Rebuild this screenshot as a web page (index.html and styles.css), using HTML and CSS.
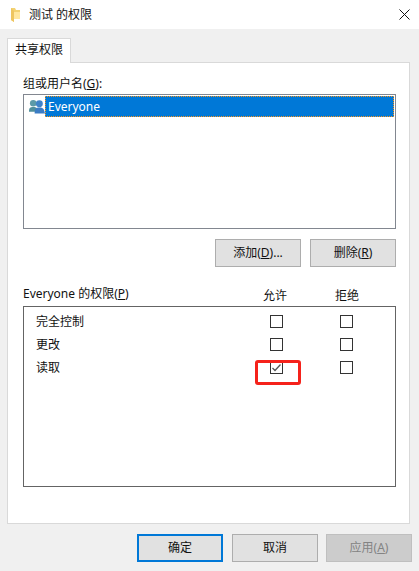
FILE: index.html
```html
<!doctype html>
<html lang="zh-CN">
  <head>
    <meta charset="UTF-8" />
    <title>测试 的权限</title>
    <link rel="stylesheet" href="styles.css">
  </head>
  <body>
    <div class="titlebar">
      <svg class="folder-icon" width="10" height="14" viewBox="0 0 10 14">
        <path d="M0 0h4l1 2h4v9H3v3L0 12z" fill="#f3d272" />
        <path d="M3 4h6v7H3z" fill="#ffe7a0" />
        <path d="M0 0l3 3v11l-3-2z" fill="#eec560" />
      </svg>
      <span class="title">测试 的权限</span>
      <svg class="close-icon" width="11" height="11" viewBox="0 0 11 11">
        <path d="M.5.5l10 10M10.5.5l-10 10" stroke="#111" stroke-width="1" fill="none" />
      </svg>
    </div>

    <div class="tabs">
      <div class="tab">共享权限</div>
    </div>

    <div class="panel">
      <label class="label">组或用户名(<u>G</u>):</label>
      <div class="user-list">
        <div class="user-row">
          <svg class="users-icon" width="16" height="15" viewBox="0 0 17 15">
            <circle cx="4.5" cy="4" r="3.5" fill="#5b9aa8" />
            <path d="M0 13c0-4 1-5 4.5-5s4.5 1 4.5 5z" fill="#4f8f9c" />
            <circle cx="11" cy="4.5" r="3.7" fill="#3f83c8" />
            <path d="M6 15c0-5 1-6.500 5-6.500s5 1.500 6 6.500z" fill="#3b7cc4" />
          </svg>
          <span class="user-name">Everyone</span>
        </div>
      </div>

      <div class="list-actions">
        <button class="btn">添加(<u>D</u>)...</button>
        <button class="btn">删除(<u>R</u>)</button>
      </div>

      <div class="perm-head">
        <span>Everyone 的权限(<u>P</u>)</span>
        <span class="col col-label">允许</span>
        <span class="col">拒绝</span>
      </div>

      <div class="perm-box">
        <div class="perm-row">
          <span>完全控制</span>
          <span class="col"><i class="check"></i></span>
          <span class="col"><i class="check"></i></span>
        </div>
        <div class="perm-row">
          <span>更改</span>
          <span class="col"><i class="check"></i></span>
          <span class="col"><i class="check"></i></span>
        </div>
        <div class="perm-row">
          <span>读取</span>
          <span class="col highlight">
            <i class="check">
              <svg width="11" height="11" viewBox="0 0 11 11">
                <path d="M1.500 6l2.500 2.500 5.500-6" stroke="#555" stroke-width="1.300" fill="none" />
              </svg>
            </i>
          </span>
          <span class="col"><i class="check"></i></span>
        </div>
      </div>
    </div>

    <div class="footer">
      <button class="btn btn-default">确定</button>
      <button class="btn">取消</button>
      <button class="btn btn-disabled">应用(<u>A</u>)</button>
    </div>
  </body>
</html>
```

FILE: styles.css
```css
* {
  margin: 0;
  padding: 0;
  box-sizing: border-box;
}

body {
  width: 419px;
  height: 571px;
  overflow: hidden;
  background: #f0f0f0;
  color: #111;
  font-family: "Noto Sans", "Noto Sans CJK SC", sans-serif;
  font-size: 12px;
  line-height: 16px;
}

.titlebar {
  display: flex;
  align-items: center;
  height: 29px;
  padding: 0 9px 0 11px;
  background: white;
}

.title {
  margin-left: 8px;
  flex: 1;
}

.tabs {
  display: flex;
  padding: 9px 0 0 7px;
}

.tab {
  width: 64px;
  height: 25px;
  margin-bottom: -1px;
  padding-top: 3px;
  text-align: center;
  background: white;
  border: 1px solid #d9d9d9;
  border-bottom: none;
  position: relative;
}

.panel {
  width: 403px;
  height: 462px;
  margin-left: 7px;
  padding: 13px 13px 0 15px;
  background: white;
  border: 1px solid #d9d9d9;
}

.label {
  display: block;
  height: 18px;
}

.user-list {
  width: 373px;
  height: 135px;
  padding: 1px;
  border: 1px solid #828790;
}

.user-row {
  display: flex;
  align-items: center;
  height: 21px;
  padding-left: 4px;
}

.users-icon {
  flex: none;
}

.user-name {
  flex: 1;
  height: 21px;
  padding-left: 2px;
  line-height: 19px;
  color: white;
  background: #0078d7;
  border: 1px dotted #f7941e;
}

.list-actions {
  display: flex;
  justify-content: flex-end;
  gap: 9px;
  width: 373px;
  margin-top: 10px;
}

.btn {
  width: 86px;
  height: 28px;
  font: inherit;
  color: inherit;
  background: #e1e1e1;
  border: 1px solid #adadad;
}

.perm-head {
  display: grid;
  grid-template-columns: 1fr 70px 70px;
  width: 373px;
  margin-top: 19px;
  padding-right: 14px;
  height: 20px;
}

.col {
  display: flex;
  justify-content: center;
  align-items: center;
  position: relative;
}

.col-label {
  margin-left: -4px;
}

.perm-box {
  width: 373px;
  height: 181px;
  padding: 3px 14px 0 12px;
  border: 1px solid #646464;
}

.perm-row {
  display: grid;
  grid-template-columns: 1fr 70px 70px;
  align-items: center;
  height: 23px;
}

.check {
  display: flex;
  align-items: center;
  justify-content: center;
  width: 13px;
  height: 13px;
  background: white;
  border: 1px solid #333;
}

.highlight::after {
  content: "";
  box-sizing: border-box;
  position: absolute;
  left: 14px;
  top: -1px;
  width: 46px;
  height: 25px;
  border: 3px solid #f5221b;
  border-radius: 3px;
}

.footer {
  display: flex;
  gap: 9px;
  justify-content: flex-end;
  padding: 10px 7px 0 0;
}

.btn-default {
  border: 2px solid #0078d7;
}

.btn-disabled {
  margin-left: -1px;
  color: #838383;
  background: #cccccc;
  border-color: #bfbfbf;
}
```
